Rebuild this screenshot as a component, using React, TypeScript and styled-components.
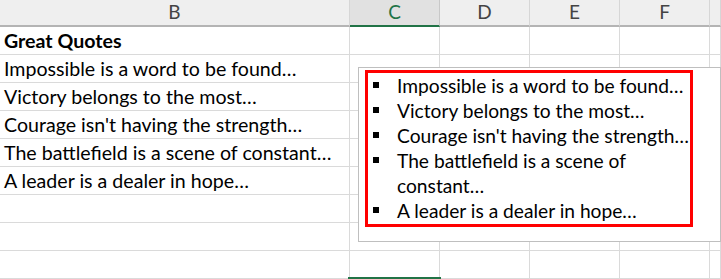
import React from 'react'
import styled, { createGlobalStyle, css } from 'styled-components'

const GlobalStyle = createGlobalStyle`
	html, body {
		margin: 0;
		padding: 0;
		background: #ffffff;
		overflow: hidden;
	}
`

const font = `'Lato', 'Open Sans', sans-serif`
const columns = '350px 90px 90px 90px 90px 1fr'

const Sheet = styled.div`
	position: relative;
	width: 721px;
	height: 279px;
	overflow: hidden;
	font-family: ${font};
	color: #000;
`

const HeaderRow = styled.div`
	display: grid;
	grid-template-columns: ${columns};
	height: 27px;
`

interface HeadProps {
	selected?: boolean
}

const HeadCell = styled.div<HeadProps>`
	${({ selected }) => css`
		box-sizing: border-box;
		display: flex;
		align-items: center;
		justify-content: center;
		padding-bottom: 2px;
		background: ${selected ? '#e1e1e1' : '#efefef'};
		border-right: 1px solid ${selected ? '#c8c8c8' : '#d6d6d6'};
		border-bottom: 2px solid ${selected ? '#217346' : '#b4b4b4'};
		color: ${selected ? '#217346' : '#444444'};
		font-size: 19px;
	`}
`

const Row = styled.div`
	display: grid;
	grid-template-columns: ${columns};
	height: 28px;
`

interface CellProps {
	bold?: boolean
	selected?: boolean
}

const Cell = styled.div<CellProps>`
	${({ bold, selected }) => css`
		position: relative;
		box-sizing: border-box;
		border-right: 1px solid #dadada;
		border-bottom: 1px solid #dadada;
		padding: 0 4px;
		font-size: 19.6px;
		line-height: 27px;
		font-weight: ${bold ? 700 : 400};
		white-space: nowrap;
		overflow: visible;
		${selected &&
		css`
			&::before {
				content: '';
				position: absolute;
				top: -2px;
				left: -2px;
				right: -2px;
				bottom: -2px;
				border: 2px solid #217346;
			}
		`}
	`}
`

const TextBox = styled.div`
	position: absolute;
	left: 358px;
	top: 67px;
	width: 363px;
	height: 175px;
	box-sizing: border-box;
	border: 1px solid #bfbfbf;
	background: #ffffff;
	padding: 2px 0 0 6px;
`

const Frame = styled.ul`
	box-sizing: border-box;
	width: 328px;
	height: 157px;
	margin: 0;
	padding: 0 0 0 5px;
	list-style: none;
	border: 3px solid #ff0000;
`

const Item = styled.li`
	display: grid;
	grid-template-columns: 24px 1fr;
	font-size: 19.2px;
	line-height: 25px;
	white-space: nowrap;
`

const Bullet = styled.span`
	width: 6px;
	height: 6px;
	margin-top: 9px;
	background: #000;
`

const quotes = [
	'Impossible is a word to be found…',
	'Victory belongs to the most…',
	"Courage isn't having the strength…",
	'The battlefield is a scene of constant…',
	'A leader is a dealer in hope…',
]

const boxLines: React.ReactNode[] = [
	quotes[0],
	quotes[1],
	quotes[2],
	<>
		The battlefield is a scene of
		<br />
		constant…
	</>,
	quotes[4],
]

const rows: { text?: string; bold?: boolean; selected?: boolean }[] = [
	{ text: 'Great Quotes', bold: true },
	...quotes.map((text) => ({ text })),
	{},
	{},
	{},
	{ selected: true },
]

// column G is only a sliver at the right edge, its letter falls outside the view
const heads = ['B', 'C', 'D', 'E', 'F', '']

export default function App() {
	return (
		<>
			<GlobalStyle />
			<Sheet>
				<HeaderRow>
					{heads.map((h, i) => (
						<HeadCell key={i} selected={h === 'C'}>
							{h}
						</HeadCell>
					))}
				</HeaderRow>
				{rows.map((row, i) => (
					<Row key={i}>
						<Cell bold={row.bold}>{row.text}</Cell>
						<Cell selected={row.selected} />
						<Cell />
						<Cell />
						<Cell />
						<Cell />
					</Row>
				))}
				<TextBox>
					<Frame>
						{boxLines.map((line, i) => (
							<Item key={i}>
								<Bullet />
								<span>{line}</span>
							</Item>
						))}
					</Frame>
				</TextBox>
			</Sheet>
		</>
	)
}
